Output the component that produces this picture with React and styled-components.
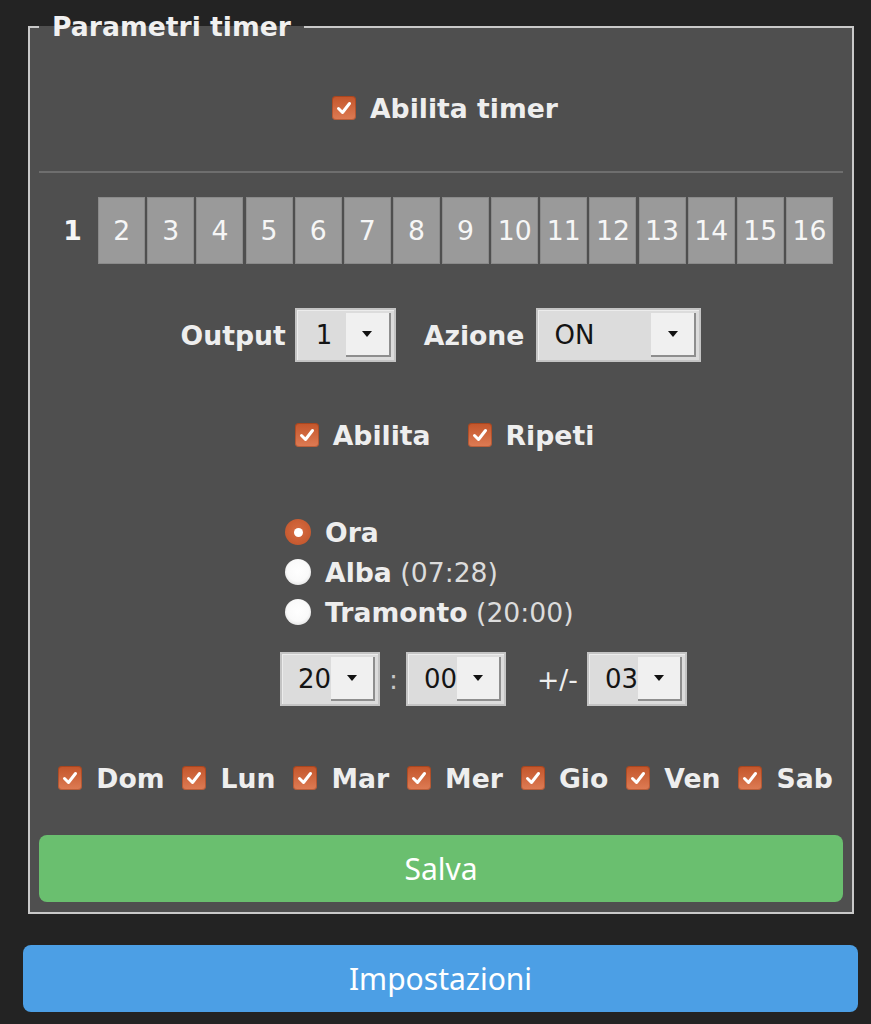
import React from 'react';
import styled, { createGlobalStyle } from 'styled-components';

const Global = createGlobalStyle`
  html, body { margin: 0; padding: 0; background: #232323; }
  body { font-family: "DejaVu Sans", sans-serif; }
`;

const Page = styled.div`
  padding: 12px 13px 12px 23px;
  display: flex;
  flex-direction: column;
`;

const Fieldset = styled.fieldset`
  margin: 0 4px 0 5px;
  padding: 0 9px 10px 9px;
  border: 2px solid #c9c9c9;
  background: #4f4f4f;
  min-width: 0;
  display: flex;
  flex-direction: column;
`;

const Legend = styled.legend`
  padding: 0 13px;
  font-size: 26.67px;
  line-height: 30px;
  font-weight: bold;
  color: #f0f0f0;
`;

const CenterRow = styled.div`
  display: flex;
  align-items: center;
  justify-content: center;
  height: ${p => p.$h || 40}px;
  margin-top: ${p => p.$mt || 0}px;
  padding-left: ${p => p.$pl || 0}px;
  gap: ${p => p.$gap || 0}px;
`;

const LeftRow = styled.div`
  display: flex;
  align-items: center;
  height: ${p => p.$h || 40}px;
  margin-top: ${p => p.$mt || 0}px;
  padding-left: ${p => p.$pl || 0}px;
`;

const CheckLabel = styled.label`
  display: inline-flex;
  align-items: center;
  gap: 14px;
  font-weight: bold;
  font-size: 26.67px;
  color: #eeeeee;
`;

const Box = styled.span`
  width: 24px;
  height: 24px;
  box-sizing: border-box;
  border-radius: 4px;
  background: linear-gradient(#c3552a, #de7c55);
  box-shadow: inset 0 0 0 1px rgba(120, 40, 10, 0.35);
  display: flex;
  align-items: center;
  justify-content: center;
  flex: none;
`;

const Divider = styled.div`
  height: 2px;
  background: #6e6e6e;
  margin-top: ${p => p.$mt}px;
`;

const Tabs = styled.div`
  display: flex;
  justify-content: center;
  gap: 2.13px;
  margin-top: 24px;
`;

const Tab = styled.div`
  width: 47px;
  height: 67px;
  box-sizing: border-box;
  display: flex;
  align-items: center;
  justify-content: center;
  font-size: 26.67px;
  color: #f6f6f6;
  background: ${p => (p.$active ? 'transparent' : '#9a9a9a')};
  border: 1px solid ${p => (p.$active ? 'transparent' : '#8a8a8a')};
  font-weight: ${p => (p.$active ? 'bold' : 'normal')};
`;

const FieldLabel = styled.span`
  font-weight: ${p => (p.$normal ? 'normal' : 'bold')};
  font-size: 26.67px;
  color: ${p => p.$color || '#eeeeee'};
  margin: 0 ${p => p.$mr || 0}px 0 ${p => p.$ml || 0}px;
`;

const SelectBox = styled.div`
  display: inline-flex;
  box-sizing: border-box;
  width: ${p => p.$w}px;
  height: 54px;
  border: 2px solid #c4c4c4;
  box-shadow: inset 1px 1px 0 #ececec;
  background: #dcdcdc;
  font-family: "DejaVu Sans", sans-serif;
  font-size: 26px;
  color: #141414;
  align-items: stretch;
  flex: none;
`;

const SelectValue = styled.span`
  flex: 1;
  display: flex;
  align-items: center;
  padding-left: ${p => p.$pl || 16}px;
`;

const SelectButton = styled.span`
  width: 45px;
  margin: 3px 3px 3px 0;
  background: #f0f0f0;
  box-shadow: inset -2px -2px 0 #8e8e8e;
  display: flex;
  align-items: center;
  justify-content: center;
`;

const Arrow = styled.span`
  width: 0;
  height: 0;
  border-left: 5px solid transparent;
  border-right: 5px solid transparent;
  border-top: 6px solid #111;
  margin: -2px 2px 0 0;
`;

const RadioGroup = styled.div`
  display: flex;
  flex-direction: column;
  margin-top: 57px;
  padding-left: 246px;
`;

const RadioRow = styled.label`
  display: flex;
  align-items: center;
  gap: 14px;
  height: 40px;
  font-size: 26.67px;
  color: #eeeeee;
`;

const Radio = styled.span`
  width: 26px;
  height: 26px;
  border-radius: 50%;
  box-sizing: border-box;
  flex: none;
  display: flex;
  align-items: center;
  justify-content: center;
  background: ${p =>
    p.$checked
      ? 'radial-gradient(circle at 50% 45%, #d86c42 0%, #c65a30 70%, #b04c26 100%)'
      : 'radial-gradient(circle at 50% 45%, #ffffff 0%, #fafafa 55%, #cfcfcf 100%)'};
  &::after {
    content: '';
    display: ${p => (p.$checked ? 'block' : 'none')};
    width: 9px;
    height: 9px;
    border-radius: 50%;
    background: #fff;
  }
`;

const Bold = styled.b`
  font-weight: bold;
`;

const Muted = styled.span`
  font-weight: normal;
  color: #dcdcdc;
`;

const DayRow = styled.div`
  display: flex;
  align-items: center;
  justify-content: center;
  gap: 18px;
  height: 40px;
  margin-top: 52px;
  padding-left: 9px;
`;

const ActionButton = styled.div`
  height: 67px;
  border-radius: 8px;
  background: ${p => p.$bg};
  color: #ffffff;
  font-family: "Noto Sans", "Open Sans", sans-serif;
  font-size: 30px;
  display: flex;
  align-items: center;
  justify-content: center;
  margin-top: ${p => p.$mt}px;
`;

const Check = () => (
  <svg width="18" height="18" viewBox="0 0 18 18">
    <path d="M3.5 9.5 L7.5 13.5 L14.5 4.5" fill="none" stroke="#fff" strokeWidth="3" strokeLinecap="round" strokeLinejoin="round" />
  </svg>
);

const Checkbox = ({ children }) => (
  <CheckLabel>
    <Box><Check /></Box>
    {children}
  </CheckLabel>
);

const Select = ({ value, w, pl }) => (
  <SelectBox $w={w}>
    <SelectValue $pl={pl}>{value}</SelectValue>
    <SelectButton><Arrow /></SelectButton>
  </SelectBox>
);

const days = ['Dom', 'Lun', 'Mar', 'Mer', 'Gio', 'Ven', 'Sab'];

export default function App() {
  return (
    <>
      <Global />
      <Page>
        <Fieldset>
          <Legend>Parametri timer</Legend>
          <CenterRow $mt={46} $pl={8}>
            <Checkbox>Abilita timer</Checkbox>
          </CenterRow>
          <Divider $mt={43} />
          <Tabs>
            {Array.from({ length: 16 }, (_, i) => (
              <Tab key={i} $active={i === 0}>{i + 1}</Tab>
            ))}
          </Tabs>
          <CenterRow $mt={44} $h={54}>
            <FieldLabel $mr={9}>Output</FieldLabel>
            <Select value="1" w={101} pl={19} />
            <FieldLabel $ml={28} $mr={12}>Azione</FieldLabel>
            <Select value="ON" w={165} pl={16} />
          </CenterRow>
          <CenterRow $mt={53} $gap={37} $pl={7}>
            <Checkbox>Abilita</Checkbox>
            <Checkbox>Ripeti</Checkbox>
          </CenterRow>
          <RadioGroup>
            <RadioRow><Radio $checked /><Bold>Ora</Bold></RadioRow>
            <RadioRow><Radio /><span><Bold>Alba</Bold> <Muted>(07:28)</Muted></span></RadioRow>
            <RadioRow><Radio /><span><Bold>Tramonto</Bold> <Muted>(20:00)</Muted></span></RadioRow>
          </RadioGroup>
          <LeftRow $mt={20} $h={54} $pl={241}>
            <Select value="20" w={100} pl={16} />
            <FieldLabel $normal $color="#c8c8c8" $ml={9} $mr={8}>:</FieldLabel>
            <Select value="00" w={100} pl={16} />
            <FieldLabel $normal $ml={31} $mr={9}>+/-</FieldLabel>
            <Select value="03" w={100} pl={16} />
          </LeftRow>
          <DayRow>
            {days.map(d => (
              <Checkbox key={d}>{d}</Checkbox>
            ))}
          </DayRow>
          <ActionButton $bg="#6abf6f" $mt={37}>Salva</ActionButton>
        </Fieldset>
        <ActionButton $bg="#4c9fe5" $mt={31}>Impostazioni</ActionButton>
      </Page>
    </>
  );
}
